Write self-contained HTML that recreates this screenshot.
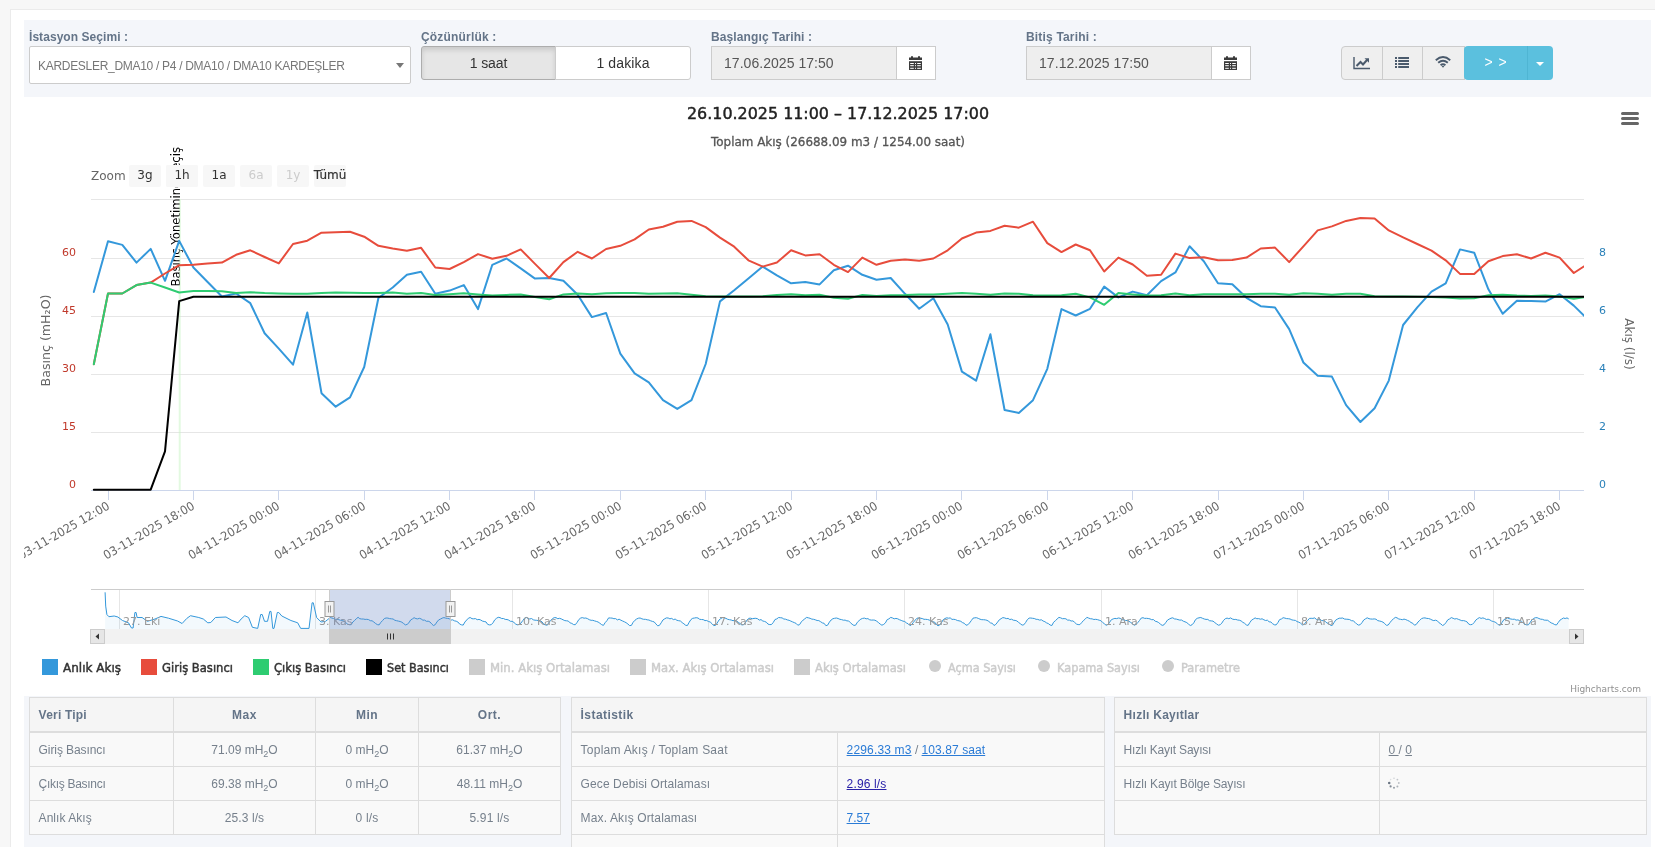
<!DOCTYPE html>
<html lang="tr"><head><meta charset="utf-8"><title>DMA10 KARDEŞLER</title>
<style>
html,body{margin:0;padding:0}
body{width:1655px;height:847px;overflow:hidden;position:relative;background:#f7f7f7;font-family:"Liberation Sans","DejaVu Sans",sans-serif;color:#676a6c;font-size:13px}
.abs{position:absolute;box-sizing:border-box}
.panel{left:10px;top:9px;width:1660px;height:860px;background:#fff;border:1px solid #ebebeb}
.bar{left:24px;top:20px;width:1627px;height:77px;background:#f4f6fa}
.lower{left:24px;top:696px;width:1627px;height:160px;background:#f4f6fa}
.lbl{font-weight:bold;font-size:12px;color:#647488;white-space:nowrap;line-height:16px}
.box{background:#fff;border:1px solid #ccc;border-radius:1px}
.chart{position:absolute;left:24px;top:97px;display:block}
.sel{left:29px;top:46px;width:382px;height:38px;border-radius:2px}
.seltxt{left:38px;top:58.5px;font-size:12px;color:#777;line-height:14px;white-space:nowrap}
.btn{text-align:center;font-size:14px;color:#333;line-height:32px;height:34px;top:46px;white-space:nowrap}
.inp{top:46px;height:34px;background:#eee;border:1px solid #ccc;font-size:14px;color:#555;line-height:32px;padding-left:12px;white-space:nowrap}
.addon{top:46px;height:34px;width:40px;background:#fff;border:1px solid #ccc;border-left:0}
.gbtn{top:46px;height:34px;background:#efefef;border:1px solid #ccc}
table{border-collapse:collapse;position:absolute;table-layout:fixed;background:#f9f9f9;font-size:12px;color:#76808c}
td,th{border:1px solid #ddd;height:33px;padding:0 0 0 8.6px;text-align:left;font-weight:normal;white-space:nowrap;overflow:hidden}
th{font-weight:bold;color:#647488;background:#f5f5f5;border-bottom:2px solid #ddd;height:33px}
.c{text-align:center;padding:0}
sub{font-size:9px;vertical-align:baseline;position:relative;top:3px;letter-spacing:0}
a{color:#2a7bd6;text-decoration:underline}
a.v{color:#2a22a8}
a.g{color:#76808c}
.wrap{position:absolute;left:0;top:0;width:1655px;height:847px;will-change:transform}
</style></head><body>
<div class="wrap">
<div class="abs panel"></div>
<div class="abs bar"></div>
<div class="abs lbl" style="left:29px;top:29px"><span style="letter-spacing:0.056px">İstasyon Seçimi :</span></div>
<div class="abs box sel"></div>
<div class="abs seltxt"><span style="letter-spacing:-0.296px">KARDESLER_DMA10 / P4 / DMA10 / DMA10 KARDEŞLER</span></div>
<svg class="abs" style="left:396px;top:63px" width="8" height="5" viewBox="0 0 8 5"><path d="M0 0H8L4 5Z" fill="#777"/></svg>
<div class="abs lbl" style="left:421px;top:29px"><span style="letter-spacing:0.181px">Çözünürlük :</span></div>
<div class="abs btn" style="left:421px;width:135px;background:#e6e6e6;border:1px solid #adadad;border-radius:3px 0 0 3px;box-shadow:inset 0 3px 5px rgba(0,0,0,.125)"><span style="letter-spacing:-0.09px">1 saat</span></div>
<div class="abs btn" style="left:555px;width:136px;background:#fff;border:1px solid #ccc;border-radius:0 3px 3px 0"><span style="letter-spacing:0.13px">1 dakika</span></div>
<div class="abs lbl" style="left:711px;top:29px"><span style="letter-spacing:0.109px">Başlangıç Tarihi :</span></div>
<div class="abs inp" style="left:711px;width:186px"><span style="letter-spacing:0.044px">17.06.2025 17:50</span></div>
<div class="abs addon" style="left:897px;width:39px"></div>
<svg class="abs" style="left:909px;top:56px" width="13" height="14" viewBox="0 0 13 14"><path d="M0 1.6H2V0.6Q3 -0.4 4 0.6V1.6H9V0.6Q10 -0.4 11 0.6V1.6H13V4H0Z" fill="#3b3b3b"/><rect x="0" y="5.2" width="13" height="8.8" fill="#3b3b3b"/><g fill="#fff"><rect x="1.2" y="7" width="3.6" height="1"/><rect x="6" y="7" width="1" height="1"/><rect x="8.2" y="7" width="3.6" height="1"/><rect x="1.2" y="9.2" width="3.6" height="1"/><rect x="6" y="9.2" width="1" height="1"/><rect x="8.2" y="9.2" width="3.6" height="1"/><rect x="1.2" y="11.8" width="3.6" height="1"/><rect x="6" y="11.8" width="1" height="1"/><rect x="8.2" y="11.8" width="3.6" height="1"/></g></svg>
<div class="abs lbl" style="left:1026px;top:29px"><span style="letter-spacing:0.175px">Bitiş Tarihi :</span></div>
<div class="abs inp" style="left:1026px;width:186px"><span style="letter-spacing:0.056px">17.12.2025 17:50</span></div>
<div class="abs addon" style="left:1212px;width:39px"></div>
<svg class="abs" style="left:1224px;top:56px" width="13" height="14" viewBox="0 0 13 14"><path d="M0 1.6H2V0.6Q3 -0.4 4 0.6V1.6H9V0.6Q10 -0.4 11 0.6V1.6H13V4H0Z" fill="#3b3b3b"/><rect x="0" y="5.2" width="13" height="8.8" fill="#3b3b3b"/><g fill="#fff"><rect x="1.2" y="7" width="3.6" height="1"/><rect x="6" y="7" width="1" height="1"/><rect x="8.2" y="7" width="3.6" height="1"/><rect x="1.2" y="9.2" width="3.6" height="1"/><rect x="6" y="9.2" width="1" height="1"/><rect x="8.2" y="9.2" width="3.6" height="1"/><rect x="1.2" y="11.8" width="3.6" height="1"/><rect x="6" y="11.8" width="1" height="1"/><rect x="8.2" y="11.8" width="3.6" height="1"/></g></svg>
<div class="abs gbtn" style="left:1341px;width:42px;border-radius:4px 0 0 4px"></div>
<div class="abs gbtn" style="left:1382px;width:41px"></div>
<div class="abs gbtn" style="left:1422px;width:43px"></div>
<svg class="abs" style="left:1353px;top:56px" width="18" height="14" viewBox="0 0 18 14"><path d="M1 1V12.5H17" fill="none" stroke="#4a5a6c" stroke-width="1.4"/><path d="M3.5 10L7.5 6L10 8.5L14 4" fill="none" stroke="#4a5a6c" stroke-width="2"/><path d="M11.5 2.2H16V6.7Z" fill="#4a5a6c"/></svg>
<svg class="abs" style="left:1395px;top:57px" width="14" height="11" viewBox="0 0 14 11"><g fill="#4a5a6c"><rect x="0" y="0" width="2" height="2"/><rect x="3.2" y="0" width="10.8" height="2"/><rect x="0" y="3" width="2" height="2"/><rect x="3.2" y="3" width="10.8" height="2"/><rect x="0" y="6" width="2" height="2"/><rect x="3.2" y="6" width="10.8" height="2"/><rect x="0" y="9" width="2" height="2"/><rect x="3.2" y="9" width="10.8" height="2"/></g></svg>
<svg class="abs" style="left:1435px;top:56px" width="16" height="12" viewBox="0 0 16 12"><g fill="none" stroke="#4a5a6c" stroke-width="1.9" stroke-linecap="butt"><path d="M0.8 4.2Q8 -2.2 15.2 4.2"/><path d="M3.2 6.8Q8 2.6 12.8 6.8"/><path d="M5.6 9.2Q8 7.2 10.4 9.2"/></g><path d="M6.6 10.2L8 11.8L9.4 10.2Q8 9.2 6.6 10.2Z" fill="#4a5a6c"/></svg>
<div class="abs" style="left:1464px;top:46px;width:64px;height:34px;background:#5bc0de;border-right:1px solid #4fb5d3;border-radius:4px 0 0 4px"></div>
<div class="abs" style="left:1528px;top:46px;width:25px;height:34px;background:#5bc0de;border-radius:0 4px 4px 0"></div>
<div class="abs" style="left:1464px;top:46px;width:64px;height:34px;line-height:32px;text-align:center;color:#fff;font-size:14px;letter-spacing:1px;white-space:pre">&gt; &gt;</div>
<svg class="abs" style="left:1536px;top:62px" width="8" height="4" viewBox="0 0 8 4"><path d="M0 0H8L4 4Z" fill="#fff"/></svg>
<svg class="chart" viewBox="24 97 1627 599" width="1627" height="599">
<defs><clipPath id="pc"><rect x="91" y="195" width="1493" height="297"/></clipPath></defs>
<rect x="24" y="97" width="1627" height="599" fill="#fff"/>
<g font-family="'DejaVu Sans','Liberation Sans',sans-serif">
<text x="838" y="119" text-anchor="middle" font-size="16" fill="#222" stroke="#222" stroke-width="0.45" textLength="302" lengthAdjust="spacingAndGlyphs">26.10.2025 11:00 – 17.12.2025 17:00</text>
<text x="838" y="145.5" text-anchor="middle" font-size="12" fill="#555" stroke="#555" stroke-width="0.3" textLength="254" lengthAdjust="spacingAndGlyphs">Toplam Akış (26688.09 m3 / 1254.00 saat)</text>
<path d="M1622.5 113.5H1637.5M1622.5 118.5H1637.5M1622.5 123.5H1637.5" stroke="#666" stroke-width="3" stroke-linecap="round" fill="none"/>
<path d="M91 199.5H1584M91 258.5H1584M91 316.5H1584M91 374.5H1584M91 432.5H1584" stroke="#e6e6e6" stroke-width="1" fill="none"/>
<path d="M91 490.5H1584" stroke="#ccd6eb" stroke-width="1"/>
<path d="M108.5 490.5V500M193.5 490.5V500M278.5 490.5V500M364.5 490.5V500M449.5 490.5V500M534.5 490.5V500M620.5 490.5V500M705.5 490.5V500M791.5 490.5V500M876.5 490.5V500M961.5 490.5V500M1047.5 490.5V500M1132.5 490.5V500M1218.5 490.5V500M1303.5 490.5V500M1388.5 490.5V500M1474.5 490.5V500M1559.5 490.5V500" stroke="#ccd6eb" stroke-width="1"/>
<g font-size="12" fill="#555">
<text x="91" y="179.5" fill="#666">Zoom</text>
<rect x="129" y="165" width="32" height="22" rx="2" fill="#f7f7f7"/><text x="145" y="179" text-anchor="middle" fill="#333">3g</text><rect x="166" y="165" width="32" height="22" rx="2" fill="#f7f7f7"/><text x="182" y="179" text-anchor="middle" fill="#333">1h</text><rect x="203" y="165" width="32" height="22" rx="2" fill="#f7f7f7"/><text x="219" y="179" text-anchor="middle" fill="#333">1a</text><rect x="240" y="165" width="32" height="22" rx="2" fill="#f7f7f7"/><text x="256" y="179" text-anchor="middle" fill="#ccc">6a</text><rect x="277" y="165" width="32" height="22" rx="2" fill="#f7f7f7"/><text x="293" y="179" text-anchor="middle" fill="#ccc">1y</text><rect x="314" y="165" width="32" height="22" rx="2" fill="#f7f7f7"/><text x="330" y="179" text-anchor="middle" fill="#333" stroke="#333" stroke-width="0.2">Tümü</text>
</g>
<path d="M179.7 199V490" stroke="#c9f5c4" stroke-width="2" opacity="0.5"/>
<text transform="translate(179.5 286.5) rotate(-90)" font-size="12" fill="#000" textLength="139.5" lengthAdjust="spacingAndGlyphs">Basınç Yönetimine geçiş</text>
<path d="M180 199V290" stroke="#e4fbe1" stroke-width="1.4" opacity="0.6"/>
<g clip-path="url(#pc)" fill="none" stroke-width="2" stroke-linejoin="round" stroke-linecap="round">
<path d="M93.8 292.0L108.0 241.3L122.3 244.9L136.5 262.6L150.7 248.9L165.0 280.8L179.2 240.9L193.4 267.5L207.6 282.0L221.9 296.5L236.1 293.5L250.3 303.2L264.6 333.2L278.8 348.6L293.0 364.7L307.3 312.5L321.5 393.2L335.7 406.7L350.0 397.3L364.2 367.0L378.4 298.0L392.7 287.5L406.9 274.8L421.1 271.7L435.3 293.8L449.6 290.6L463.8 285.1L478.0 309.1L492.3 264.8L506.5 258.5L520.7 268.4L535.0 278.6L549.2 278.0L563.4 280.8L577.7 294.7L591.9 317.1L606.1 313.0L620.3 353.7L634.6 373.4L648.8 382.4L663.0 400.2L677.3 408.9L691.5 400.2L705.7 364.0L720.0 301.4L734.2 290.2L748.4 278.4L762.7 266.6L776.9 275.3L791.1 283.3L805.3 282.0L819.6 284.4L833.8 270.3L848.0 265.7L862.3 274.8L876.5 279.7L890.7 278.0L905.0 293.8L919.2 308.7L933.4 298.3L947.7 324.5L961.9 371.6L976.1 380.6L990.4 334.3L1004.6 410.0L1018.8 412.9L1033.0 400.2L1047.3 368.8L1061.5 309.1L1075.7 315.5L1090.0 308.8L1104.2 286.6L1118.4 297.4L1132.7 291.6L1146.9 295.3L1161.1 281.1L1175.4 272.4L1189.6 246.3L1203.8 261.2L1218.0 283.3L1232.3 284.2L1246.5 297.8L1260.7 306.2L1275.0 307.5L1289.2 329.1L1303.4 362.5L1317.7 375.7L1331.9 376.6L1346.1 405.1L1360.4 422.0L1374.6 408.2L1388.8 380.6L1403.1 325.0L1417.3 307.3L1431.5 291.7L1445.7 283.3L1460.0 249.4L1474.2 252.7L1488.4 289.3L1502.7 313.8L1516.9 300.7L1531.1 301.1L1545.4 301.6L1559.6 294.2L1573.8 305.6L1588.1 319.6" stroke="#3498db"/>
<path d="M93.8 364.2L108.0 293.5L122.3 293.5L136.5 285.1L150.7 282.6L165.0 273.5L179.2 265.2L193.4 264.8L207.6 263.4L221.9 262.6L236.1 254.8L250.3 250.3L264.6 257.0L278.8 263.4L293.0 244.0L307.3 240.7L321.5 232.7L335.7 232.2L350.0 231.8L364.2 236.7L378.4 245.8L392.7 248.5L406.9 250.7L421.1 247.8L435.3 267.5L449.6 269.0L463.8 262.1L478.0 254.1L492.3 258.7L506.5 255.8L520.7 249.4L535.0 263.9L549.2 278.0L563.4 262.1L577.7 251.8L591.9 258.5L606.1 249.0L620.3 245.8L634.6 239.4L648.8 229.5L663.0 226.8L677.3 221.7L691.5 220.9L705.7 227.1L720.0 237.6L734.2 246.7L748.4 260.3L762.7 266.6L776.9 262.5L791.1 250.3L805.3 255.4L819.6 254.3L833.8 264.8L848.0 272.1L862.3 257.6L876.5 264.8L890.7 260.8L905.0 259.4L919.2 260.8L933.4 258.5L947.7 250.3L961.9 238.5L976.1 232.6L990.4 230.9L1004.6 225.8L1018.8 227.7L1033.0 221.7L1047.3 243.1L1061.5 252.1L1075.7 244.5L1090.0 250.3L1104.2 271.5L1118.4 257.6L1132.7 264.5L1146.9 275.7L1161.1 274.8L1175.4 253.6L1189.6 258.1L1203.8 257.2L1218.0 260.3L1232.3 259.9L1246.5 257.6L1260.7 248.5L1275.0 247.6L1289.2 262.1L1303.4 246.3L1317.7 230.4L1331.9 226.4L1346.1 220.9L1360.4 218.1L1374.6 218.4L1388.8 230.4L1403.1 237.3L1417.3 244.0L1431.5 250.7L1445.7 260.3L1460.0 273.9L1474.2 273.9L1488.4 261.2L1502.7 256.1L1516.9 254.3L1531.1 258.5L1545.4 252.7L1559.6 257.6L1573.8 273.0L1588.1 263.7" stroke="#e74c3c"/>
<path d="M93.8 364.2L108.0 293.5L122.3 293.5L136.5 285.1L150.7 282.6L165.0 287.5L179.2 292.5L193.4 291.1L207.6 291.1L221.9 291.3L236.1 292.9L250.3 292.2L264.6 293.1L278.8 293.5L293.0 293.8L307.3 293.8L321.5 292.9L335.7 292.4L350.0 292.7L364.2 293.1L378.4 293.1L392.7 292.5L406.9 293.8L421.1 292.9L435.3 294.9L449.6 294.2L463.8 293.3L478.0 294.4L492.3 295.6L506.5 294.9L520.7 294.5L535.0 297.1L549.2 299.3L563.4 294.4L577.7 293.5L591.9 294.2L606.1 293.3L620.3 293.1L634.6 293.1L648.8 293.8L663.0 293.5L677.3 293.3L691.5 294.7L705.7 296.2L720.0 296.5L734.2 296.5L748.4 296.5L762.7 296.3L776.9 294.9L791.1 294.2L805.3 295.3L819.6 294.7L833.8 297.8L848.0 298.7L862.3 294.9L876.5 296.0L890.7 295.3L905.0 295.1L919.2 294.5L933.4 294.5L947.7 293.8L961.9 293.1L976.1 293.8L990.4 294.7L1004.6 293.5L1018.8 293.8L1033.0 295.3L1047.3 295.6L1061.5 295.3L1075.7 293.8L1090.0 297.4L1104.2 304.8L1118.4 292.9L1132.7 294.4L1146.9 295.6L1161.1 295.3L1175.4 293.5L1189.6 295.3L1203.8 294.2L1218.0 294.2L1232.3 294.2L1246.5 294.2L1260.7 293.8L1275.0 293.8L1289.2 294.7L1303.4 293.3L1317.7 293.8L1331.9 294.7L1346.1 293.8L1360.4 293.8L1374.6 296.2L1388.8 296.5L1403.1 296.5L1417.3 296.7L1431.5 296.9L1445.7 297.4L1460.0 298.5L1474.2 298.2L1488.4 295.3L1502.7 294.7L1516.9 295.6L1531.1 296.0L1545.4 295.6L1559.6 296.5L1573.8 298.7L1588.1 296.5" stroke="#2ecc71"/>
<path d="M93.8 489.7L108.0 489.7L122.3 489.7L136.5 489.7L150.7 489.7L165.0 451.4L179.2 301.1L193.4 296.7L207.6 296.7L221.9 296.7L236.1 296.7L250.3 296.7L264.6 296.7L278.8 296.7L293.0 296.7L307.3 296.7L321.5 296.7L335.7 296.7L350.0 296.7L364.2 296.7L378.4 296.7L392.7 296.7L406.9 296.7L421.1 296.7L435.3 296.7L449.6 296.7L463.8 296.7L478.0 296.7L492.3 296.7L506.5 296.7L520.7 296.7L535.0 296.7L549.2 296.7L563.4 296.7L577.7 296.7L591.9 296.7L606.1 296.7L620.3 296.7L634.6 296.7L648.8 296.7L663.0 296.7L677.3 296.7L691.5 296.7L705.7 296.7L720.0 296.7L734.2 296.7L748.4 296.7L762.7 296.7L776.9 296.7L791.1 296.7L805.3 296.7L819.6 296.7L833.8 296.7L848.0 296.7L862.3 296.7L876.5 296.7L890.7 296.7L905.0 296.7L919.2 296.7L933.4 296.7L947.7 296.7L961.9 296.7L976.1 296.7L990.4 296.7L1004.6 296.7L1018.8 296.7L1033.0 296.7L1047.3 296.7L1061.5 296.7L1075.7 296.7L1090.0 296.7L1104.2 296.7L1118.4 296.7L1132.7 296.7L1146.9 296.7L1161.1 296.7L1175.4 296.7L1189.6 296.7L1203.8 296.7L1218.0 296.7L1232.3 296.7L1246.5 296.7L1260.7 296.7L1275.0 296.7L1289.2 296.7L1303.4 296.7L1317.7 296.7L1331.9 296.7L1346.1 296.7L1360.4 296.7L1374.6 296.7L1388.8 296.7L1403.1 296.7L1417.3 296.7L1431.5 296.7L1445.7 296.7L1460.0 296.7L1474.2 296.7L1488.4 296.7L1502.7 296.7L1516.9 296.7L1531.1 296.7L1545.4 296.7L1559.6 296.7L1573.8 296.7L1588.1 296.7" stroke="#000"/>
</g>
<rect x="166" y="165" width="32" height="22" rx="2" fill="#f7f7f7"/><text x="182" y="179" text-anchor="middle" font-size="12" fill="#333">1h</text>
<g font-size="11" fill="#c0392b"><text x="76" y="255.7" text-anchor="end">60</text><text x="76" y="313.7" text-anchor="end">45</text><text x="76" y="371.7" text-anchor="end">30</text><text x="76" y="429.7" text-anchor="end">15</text><text x="76" y="487.7" text-anchor="end">0</text></g>
<g font-size="11" fill="#2980b9"><text x="1599" y="255.7">8</text><text x="1599" y="313.7">6</text><text x="1599" y="371.7">4</text><text x="1599" y="429.7">2</text><text x="1599" y="487.7">0</text></g>
<text transform="translate(50 340.5) rotate(-90)" text-anchor="middle" font-size="12" fill="#666" textLength="92" lengthAdjust="spacingAndGlyphs">Basınç (mH₂O)</text>
<text transform="translate(1625 344) rotate(90)" text-anchor="middle" font-size="12" fill="#666">Akış (l/s)</text>
<g font-size="12" fill="#666"><text transform="translate(110.5 508.3) rotate(-30)" text-anchor="end" textLength="103" lengthAdjust="spacingAndGlyphs">03-11-2025 12:00</text><text transform="translate(195.5 508.3) rotate(-30)" text-anchor="end" textLength="103" lengthAdjust="spacingAndGlyphs">03-11-2025 18:00</text><text transform="translate(280.5 508.3) rotate(-30)" text-anchor="end" textLength="103" lengthAdjust="spacingAndGlyphs">04-11-2025 00:00</text><text transform="translate(366.5 508.3) rotate(-30)" text-anchor="end" textLength="103" lengthAdjust="spacingAndGlyphs">04-11-2025 06:00</text><text transform="translate(451.5 508.3) rotate(-30)" text-anchor="end" textLength="103" lengthAdjust="spacingAndGlyphs">04-11-2025 12:00</text><text transform="translate(536.5 508.3) rotate(-30)" text-anchor="end" textLength="103" lengthAdjust="spacingAndGlyphs">04-11-2025 18:00</text><text transform="translate(622.5 508.3) rotate(-30)" text-anchor="end" textLength="103" lengthAdjust="spacingAndGlyphs">05-11-2025 00:00</text><text transform="translate(707.5 508.3) rotate(-30)" text-anchor="end" textLength="103" lengthAdjust="spacingAndGlyphs">05-11-2025 06:00</text><text transform="translate(793.5 508.3) rotate(-30)" text-anchor="end" textLength="103" lengthAdjust="spacingAndGlyphs">05-11-2025 12:00</text><text transform="translate(878.5 508.3) rotate(-30)" text-anchor="end" textLength="103" lengthAdjust="spacingAndGlyphs">05-11-2025 18:00</text><text transform="translate(963.5 508.3) rotate(-30)" text-anchor="end" textLength="103" lengthAdjust="spacingAndGlyphs">06-11-2025 00:00</text><text transform="translate(1049.5 508.3) rotate(-30)" text-anchor="end" textLength="103" lengthAdjust="spacingAndGlyphs">06-11-2025 06:00</text><text transform="translate(1134.5 508.3) rotate(-30)" text-anchor="end" textLength="103" lengthAdjust="spacingAndGlyphs">06-11-2025 12:00</text><text transform="translate(1220.5 508.3) rotate(-30)" text-anchor="end" textLength="103" lengthAdjust="spacingAndGlyphs">06-11-2025 18:00</text><text transform="translate(1305.5 508.3) rotate(-30)" text-anchor="end" textLength="103" lengthAdjust="spacingAndGlyphs">07-11-2025 00:00</text><text transform="translate(1390.5 508.3) rotate(-30)" text-anchor="end" textLength="103" lengthAdjust="spacingAndGlyphs">07-11-2025 06:00</text><text transform="translate(1476.5 508.3) rotate(-30)" text-anchor="end" textLength="103" lengthAdjust="spacingAndGlyphs">07-11-2025 12:00</text><text transform="translate(1561.5 508.3) rotate(-30)" text-anchor="end" textLength="103" lengthAdjust="spacingAndGlyphs">07-11-2025 18:00</text></g>
<!-- navigator -->
<path d="M119.5 590V629M315.5 590V629M512.5 590V629M708.5 590V629M904.5 590V629M1101.5 590V629M1297.5 590V629M1493.5 590V629" stroke="#e6e6e6" stroke-width="1"/>
<path d="M105.1 592.3L105.7 606.1L106.9 614.5L108.9 616.7L114.2 616.0L117.9 617.0L122.5 620.5L128.5 622.8L131.5 628.0L133.1 628.0L134.9 612.5L136.1 612.5L137.1 617.5L142.1 617.5L147.4 621.3L155.0 619.0L161.0 616.4L168.5 618.2L177.6 621.0L182.1 623.5L186.7 618.5L190.5 615.7L198.8 617.5L203.3 619.0L207.8 622.8L210.8 622.5L215.4 617.5L226.0 617.0L232.0 620.5L238.0 622.8L241.1 619.0L244.8 615.7L248.6 617.5L252.4 627.3L257.7 628.4L260.7 614.5L262.2 614.5L264.5 621.3L267.5 621.3L269.8 611.4L271.0 611.4L272.8 628.4L274.0 628.4L277.3 612.5L278.8 612.5L281.8 616.0L290.9 620.5L297.7 622.8L300.7 628.4L309.0 628.4L312.1 602.8L313.3 602.8L316.6 617.5L321.1 622.0L325.6 621.3L330.2 617.5L331.8 618.0L333.5 618.5L335.3 619.4L337.0 619.2L338.8 619.7L340.6 620.3L342.3 620.3L344.1 621.3L345.8 622.6L347.6 624.1L349.3 624.7L351.1 624.7L352.8 622.0L354.6 620.5L356.3 618.7L358.1 617.3L359.8 618.7L361.6 619.0L363.3 619.0L365.1 619.4L366.8 619.3L368.6 619.6L370.3 620.7L372.1 620.8L373.8 622.0L375.6 623.5L377.3 624.6L379.1 624.9L380.8 622.4L382.6 620.5L384.4 618.5L386.1 618.0L387.9 618.1L389.6 618.6L391.4 618.8L393.1 619.0L394.9 620.3L396.6 620.7L398.4 621.1L400.1 621.5L401.9 622.2L403.6 623.5L405.4 624.9L407.1 624.4L408.9 622.8L410.6 620.0L412.4 618.9L414.1 617.7L415.9 618.6L417.6 618.9L419.4 618.3L421.1 618.9L422.9 620.2L424.6 620.1L426.4 621.3L428.2 621.2L429.9 621.9L431.7 623.9L433.4 625.5L435.2 624.7L436.9 622.0L438.7 619.9L440.4 619.1L442.2 618.1L443.9 617.6L445.7 618.1L447.4 618.4L449.2 618.7L450.9 620.1L452.7 619.8L454.4 620.8L456.2 621.2L457.9 622.0L459.7 624.1L461.4 624.8L463.2 625.1L464.9 622.0L466.7 620.0L468.4 618.2L470.2 617.5L472.0 618.7L473.7 618.8L475.5 618.6L477.2 619.7L479.0 619.4L480.7 620.0L482.5 621.1L484.2 621.5L486.0 621.9L487.7 624.4L489.5 624.9L491.2 624.7L493.0 622.8L494.7 619.9L496.5 618.3L498.2 617.3L500.0 617.6L501.7 618.5L503.5 618.5L505.2 619.4L507.0 619.5L508.7 620.1L510.5 621.3L512.2 621.3L514.0 622.5L515.8 624.2L517.5 624.8L519.3 624.5L521.0 623.0L522.8 620.5L524.5 618.2L526.3 617.4L528.0 618.4L529.8 619.0L531.5 618.5L533.3 619.8L535.0 620.2L536.8 620.3L538.5 620.6L540.3 620.8L542.0 621.8L543.8 624.3L545.5 624.9L547.3 625.2L549.0 622.2L550.8 620.5L552.5 618.6L554.3 617.6L556.0 617.7L557.8 618.7L559.6 618.3L561.3 618.9L563.1 619.8L564.8 620.6L566.6 620.8L568.3 621.0L570.1 622.9L571.8 623.4L573.6 624.6L575.3 624.7L577.1 622.4L578.8 619.6L580.6 618.1L582.3 617.6L584.1 618.2L585.8 618.0L587.6 618.7L589.3 619.7L591.1 620.3L592.8 620.3L594.6 620.9L596.3 621.4L598.1 622.0L599.8 623.2L601.6 624.6L603.4 625.4L605.1 622.7L606.9 620.7L608.6 617.9L610.4 618.0L612.1 618.1L613.9 618.7L615.6 618.6L617.4 619.9L619.1 619.2L620.9 620.2L622.6 621.0L624.4 621.8L626.1 622.7L627.9 624.0L629.6 625.6L631.4 625.4L633.1 622.3L634.9 620.3L636.6 619.0L638.4 618.2L640.1 618.0L641.9 618.8L643.6 619.3L645.4 619.3L647.2 619.8L648.9 620.0L650.7 620.8L652.4 621.4L654.2 621.9L655.9 623.9L657.7 625.8L659.4 625.4L661.2 622.8L662.9 620.0L664.7 618.8L666.4 617.9L668.2 618.0L669.9 618.8L671.7 618.4L673.4 619.6L675.2 619.1L676.9 620.3L678.7 620.7L680.4 621.0L682.2 622.6L683.9 623.8L685.7 625.3L687.4 625.5L689.2 622.2L691.0 619.5L692.7 618.3L694.5 618.0L696.2 617.7L698.0 618.0L699.7 619.3L701.5 619.5L703.2 619.6L705.0 620.6L706.7 620.5L708.5 621.5L710.2 622.0L712.0 623.7L713.7 625.6L715.5 625.4L717.2 623.0L719.0 620.0L720.7 618.6L722.5 617.6L724.2 617.7L726.0 618.4L727.7 619.3L729.5 619.7L731.2 620.0L733.0 620.7L734.8 620.4L736.5 620.9L738.3 622.3L740.0 623.5L741.8 624.9L743.5 624.8L745.3 622.7L747.0 620.1L748.8 618.3L750.5 618.2L752.3 618.7L754.0 618.4L755.8 618.3L757.5 618.7L759.3 620.1L761.0 619.6L762.8 621.0L764.5 621.4L766.3 622.2L768.0 624.1L769.8 624.6L771.5 624.5L773.3 622.4L775.0 619.5L776.8 618.9L778.6 617.5L780.3 617.7L782.1 617.9L783.8 619.0L785.6 619.2L787.3 619.9L789.1 620.3L790.8 621.1L792.6 621.9L794.3 622.6L796.1 623.4L797.8 625.2L799.6 624.6L801.3 621.9L803.1 620.1L804.8 618.8L806.6 617.4L808.3 617.8L810.1 618.3L811.8 619.1L813.6 619.3L815.3 619.8L817.1 620.5L818.8 620.6L820.6 621.7L822.4 622.9L824.1 623.3L825.9 625.7L827.6 625.2L829.4 622.1L831.1 620.0L832.9 618.7L834.6 618.3L836.4 618.0L838.1 618.5L839.9 619.3L841.6 619.6L843.4 620.2L845.1 620.1L846.9 620.9L848.6 620.9L850.4 622.7L852.1 624.2L853.9 625.4L855.6 625.2L857.4 622.2L859.1 620.6L860.9 619.1L862.6 618.4L864.4 618.1L866.2 618.8L867.9 618.6L869.7 619.8L871.4 620.1L873.2 620.0L874.9 620.2L876.7 621.2L878.4 622.5L880.2 624.1L881.9 625.2L883.7 624.4L885.4 622.9L887.2 619.6L888.9 618.9L890.7 617.4L892.4 617.9L894.2 618.8L895.9 618.4L897.7 618.8L899.4 619.7L901.2 620.4L902.9 621.1L904.7 621.5L906.4 622.9L908.2 623.8L910.0 625.7L911.7 624.5L913.5 622.2L915.2 620.1L917.0 618.2L918.7 618.1L920.5 618.3L922.2 618.5L924.0 619.3L925.7 619.3L927.5 619.5L929.2 620.0L931.0 621.1L932.7 621.8L934.5 622.0L936.2 624.2L938.0 625.8L939.7 625.0L941.5 622.6L943.2 619.7L945.0 618.5L946.7 617.8L948.5 618.2L950.2 617.9L952.0 619.4L953.8 619.3L955.5 619.6L957.3 620.5L959.0 620.8L960.8 621.3L962.5 622.6L964.3 623.3L966.0 625.2L967.8 624.8L969.5 623.0L971.3 620.6L973.0 618.2L974.8 617.8L976.5 617.7L978.3 618.4L980.0 619.2L981.8 619.7L983.5 619.7L985.3 619.9L987.0 620.3L988.8 621.4L990.5 622.9L992.3 623.3L994.0 625.5L995.8 624.4L997.6 622.1L999.3 619.8L1001.1 618.7L1002.8 617.6L1004.6 617.9L1006.3 618.6L1008.1 618.4L1009.8 619.5L1011.6 619.2L1013.3 620.2L1015.1 620.4L1016.8 620.9L1018.6 622.4L1020.3 623.7L1022.1 625.1L1023.8 624.8L1025.6 622.5L1027.3 619.7L1029.1 618.1L1030.8 618.0L1032.6 618.3L1034.3 618.5L1036.1 619.3L1037.8 619.4L1039.6 620.1L1041.4 619.8L1043.1 621.0L1044.9 621.7L1046.6 622.9L1048.4 623.6L1050.1 625.0L1051.9 625.5L1053.6 622.2L1055.4 620.7L1057.1 619.0L1058.9 617.4L1060.6 617.8L1062.4 618.7L1064.1 618.6L1065.9 618.8L1067.6 620.1L1069.4 620.1L1071.1 621.0L1072.9 620.9L1074.6 622.3L1076.4 624.0L1078.1 624.6L1079.9 624.6L1081.6 622.7L1083.4 620.6L1085.2 619.1L1086.9 617.3L1088.7 618.1L1090.4 618.7L1092.2 618.9L1093.9 619.5L1095.7 619.3L1097.4 619.6L1099.2 620.2L1100.9 620.7L1102.7 622.5L1104.4 623.8L1106.2 625.3L1107.9 624.5L1109.7 622.1L1111.4 619.7L1113.2 618.9L1114.9 618.4L1116.7 618.6L1118.4 618.0L1120.2 618.3L1121.9 619.8L1123.7 619.7L1125.4 620.5L1127.2 620.5L1129.0 621.3L1130.7 622.4L1132.5 623.7L1134.2 625.3L1136.0 624.4L1137.7 622.7L1139.5 620.5L1141.2 618.1L1143.0 617.7L1144.7 618.4L1146.5 618.3L1148.2 618.5L1150.0 618.9L1151.7 619.7L1153.5 619.6L1155.2 621.2L1157.0 621.7L1158.7 622.6L1160.5 624.2L1162.2 625.4L1164.0 624.8L1165.7 622.6L1167.5 620.1L1169.2 619.1L1171.0 618.2L1172.8 617.8L1174.5 618.9L1176.3 619.1L1178.0 619.6L1179.8 620.1L1181.5 620.0L1183.3 621.2L1185.0 621.8L1186.8 622.6L1188.5 624.1L1190.3 625.5L1192.0 624.8L1193.8 622.8L1195.5 619.6L1197.3 618.3L1199.0 617.8L1200.8 617.5L1202.5 618.3L1204.3 619.0L1206.0 619.4L1207.8 619.4L1209.5 620.7L1211.3 620.9L1213.0 621.1L1214.8 622.6L1216.6 623.9L1218.3 625.2L1220.1 624.8L1221.8 623.1L1223.6 620.3L1225.3 618.7L1227.1 618.1L1228.8 618.7L1230.6 617.9L1232.3 619.0L1234.1 619.5L1235.8 619.4L1237.6 620.0L1239.3 620.2L1241.1 620.9L1242.8 622.3L1244.6 623.3L1246.3 624.9L1248.1 625.4L1249.8 622.6L1251.6 620.1L1253.3 619.1L1255.1 617.9L1256.8 618.7L1258.6 618.6L1260.4 619.2L1262.1 618.8L1263.9 619.8L1265.6 620.5L1267.4 620.2L1269.1 621.8L1270.9 622.0L1272.6 623.7L1274.4 624.8L1276.1 624.9L1277.9 622.6L1279.6 619.6L1281.4 619.0L1283.1 617.7L1284.9 618.1L1286.6 618.6L1288.4 618.7L1290.1 619.0L1291.9 619.9L1293.6 620.2L1295.4 620.4L1297.1 621.6L1298.9 622.2L1300.6 623.2L1302.4 624.9L1304.2 624.4L1305.9 622.1L1307.7 620.4L1309.4 618.4L1311.2 618.3L1312.9 618.4L1314.7 617.9L1316.4 619.4L1318.2 619.8L1319.9 619.2L1321.7 620.6L1323.4 620.6L1325.2 621.3L1326.9 623.0L1328.7 623.5L1330.4 625.2L1332.2 625.5L1333.9 622.8L1335.7 620.1L1337.4 619.1L1339.2 618.2L1340.9 618.2L1342.7 618.0L1344.4 619.0L1346.2 619.2L1348.0 619.3L1349.7 619.6L1351.5 620.7L1353.2 620.8L1355.0 622.3L1356.7 624.0L1358.5 625.1L1360.2 624.7L1362.0 622.6L1363.7 620.0L1365.5 618.8L1367.2 617.8L1369.0 618.7L1370.7 619.0L1372.5 619.1L1374.2 618.9L1376.0 619.2L1377.7 620.6L1379.5 621.0L1381.2 621.4L1383.0 622.2L1384.7 623.5L1386.5 625.4L1388.2 625.0L1390.0 622.6L1391.8 620.3L1393.5 618.8L1395.3 617.4L1397.0 617.8L1398.8 619.0L1400.5 619.3L1402.3 619.7L1404.0 619.1L1405.8 619.6L1407.5 620.4L1409.3 621.2L1411.0 622.5L1412.8 623.3L1414.5 625.2L1416.3 624.4L1418.0 622.0L1419.8 620.3L1421.5 618.6L1423.3 618.0L1425.0 617.9L1426.8 618.4L1428.5 618.5L1430.3 619.1L1432.0 620.0L1433.8 620.6L1435.6 620.2L1437.3 620.8L1439.1 622.8L1440.8 623.9L1442.6 625.5L1444.3 624.6L1446.1 622.4L1447.8 619.8L1449.6 618.9L1451.3 617.6L1453.1 618.3L1454.8 619.0L1456.6 618.6L1458.3 619.3L1460.1 620.0L1461.8 620.7L1463.6 620.6L1465.3 621.1L1467.1 621.9L1468.8 624.2L1470.6 624.7L1472.3 624.4L1474.1 622.6L1475.8 620.1L1477.6 618.7L1479.4 617.6L1481.1 618.4L1482.9 617.9L1484.6 618.5L1486.4 619.5L1488.1 619.2L1489.9 619.9L1491.6 621.0L1493.4 621.5L1495.1 622.1L1496.9 623.3L1498.6 625.0L1500.4 625.2L1502.1 622.3L1503.9 619.6L1505.6 618.8L1507.4 617.9L1509.1 618.6L1510.9 619.0L1512.6 619.3L1514.4 619.2L1516.1 620.1L1517.9 619.9L1519.6 620.5L1521.4 621.2L1523.2 622.9L1524.9 624.2L1526.7 624.9L1528.4 624.8L1530.2 622.3L1531.9 619.9L1533.7 618.4L1535.4 617.7L1537.2 617.7L1538.9 618.5L1540.7 619.2L1542.4 619.3L1544.2 620.1L1545.9 620.2L1547.7 620.3L1549.4 621.6L1551.2 622.9L1552.9 623.5L1554.7 624.6L1556.4 625.0L1558.2 622.6L1559.9 620.2L1561.7 619.1L1563.4 618.0L1565.2 618.5L1567.0 617.9L1568.7 618.9L1568.7 629L105.1 629Z" fill="#3498db" fill-opacity="0.06"/>
<path d="M105.1 592.3L105.7 606.1L106.9 614.5L108.9 616.7L114.2 616.0L117.9 617.0L122.5 620.5L128.5 622.8L131.5 628.0L133.1 628.0L134.9 612.5L136.1 612.5L137.1 617.5L142.1 617.5L147.4 621.3L155.0 619.0L161.0 616.4L168.5 618.2L177.6 621.0L182.1 623.5L186.7 618.5L190.5 615.7L198.8 617.5L203.3 619.0L207.8 622.8L210.8 622.5L215.4 617.5L226.0 617.0L232.0 620.5L238.0 622.8L241.1 619.0L244.8 615.7L248.6 617.5L252.4 627.3L257.7 628.4L260.7 614.5L262.2 614.5L264.5 621.3L267.5 621.3L269.8 611.4L271.0 611.4L272.8 628.4L274.0 628.4L277.3 612.5L278.8 612.5L281.8 616.0L290.9 620.5L297.7 622.8L300.7 628.4L309.0 628.4L312.1 602.8L313.3 602.8L316.6 617.5L321.1 622.0L325.6 621.3L330.2 617.5L331.8 618.0L333.5 618.5L335.3 619.4L337.0 619.2L338.8 619.7L340.6 620.3L342.3 620.3L344.1 621.3L345.8 622.6L347.6 624.1L349.3 624.7L351.1 624.7L352.8 622.0L354.6 620.5L356.3 618.7L358.1 617.3L359.8 618.7L361.6 619.0L363.3 619.0L365.1 619.4L366.8 619.3L368.6 619.6L370.3 620.7L372.1 620.8L373.8 622.0L375.6 623.5L377.3 624.6L379.1 624.9L380.8 622.4L382.6 620.5L384.4 618.5L386.1 618.0L387.9 618.1L389.6 618.6L391.4 618.8L393.1 619.0L394.9 620.3L396.6 620.7L398.4 621.1L400.1 621.5L401.9 622.2L403.6 623.5L405.4 624.9L407.1 624.4L408.9 622.8L410.6 620.0L412.4 618.9L414.1 617.7L415.9 618.6L417.6 618.9L419.4 618.3L421.1 618.9L422.9 620.2L424.6 620.1L426.4 621.3L428.2 621.2L429.9 621.9L431.7 623.9L433.4 625.5L435.2 624.7L436.9 622.0L438.7 619.9L440.4 619.1L442.2 618.1L443.9 617.6L445.7 618.1L447.4 618.4L449.2 618.7L450.9 620.1L452.7 619.8L454.4 620.8L456.2 621.2L457.9 622.0L459.7 624.1L461.4 624.8L463.2 625.1L464.9 622.0L466.7 620.0L468.4 618.2L470.2 617.5L472.0 618.7L473.7 618.8L475.5 618.6L477.2 619.7L479.0 619.4L480.7 620.0L482.5 621.1L484.2 621.5L486.0 621.9L487.7 624.4L489.5 624.9L491.2 624.7L493.0 622.8L494.7 619.9L496.5 618.3L498.2 617.3L500.0 617.6L501.7 618.5L503.5 618.5L505.2 619.4L507.0 619.5L508.7 620.1L510.5 621.3L512.2 621.3L514.0 622.5L515.8 624.2L517.5 624.8L519.3 624.5L521.0 623.0L522.8 620.5L524.5 618.2L526.3 617.4L528.0 618.4L529.8 619.0L531.5 618.5L533.3 619.8L535.0 620.2L536.8 620.3L538.5 620.6L540.3 620.8L542.0 621.8L543.8 624.3L545.5 624.9L547.3 625.2L549.0 622.2L550.8 620.5L552.5 618.6L554.3 617.6L556.0 617.7L557.8 618.7L559.6 618.3L561.3 618.9L563.1 619.8L564.8 620.6L566.6 620.8L568.3 621.0L570.1 622.9L571.8 623.4L573.6 624.6L575.3 624.7L577.1 622.4L578.8 619.6L580.6 618.1L582.3 617.6L584.1 618.2L585.8 618.0L587.6 618.7L589.3 619.7L591.1 620.3L592.8 620.3L594.6 620.9L596.3 621.4L598.1 622.0L599.8 623.2L601.6 624.6L603.4 625.4L605.1 622.7L606.9 620.7L608.6 617.9L610.4 618.0L612.1 618.1L613.9 618.7L615.6 618.6L617.4 619.9L619.1 619.2L620.9 620.2L622.6 621.0L624.4 621.8L626.1 622.7L627.9 624.0L629.6 625.6L631.4 625.4L633.1 622.3L634.9 620.3L636.6 619.0L638.4 618.2L640.1 618.0L641.9 618.8L643.6 619.3L645.4 619.3L647.2 619.8L648.9 620.0L650.7 620.8L652.4 621.4L654.2 621.9L655.9 623.9L657.7 625.8L659.4 625.4L661.2 622.8L662.9 620.0L664.7 618.8L666.4 617.9L668.2 618.0L669.9 618.8L671.7 618.4L673.4 619.6L675.2 619.1L676.9 620.3L678.7 620.7L680.4 621.0L682.2 622.6L683.9 623.8L685.7 625.3L687.4 625.5L689.2 622.2L691.0 619.5L692.7 618.3L694.5 618.0L696.2 617.7L698.0 618.0L699.7 619.3L701.5 619.5L703.2 619.6L705.0 620.6L706.7 620.5L708.5 621.5L710.2 622.0L712.0 623.7L713.7 625.6L715.5 625.4L717.2 623.0L719.0 620.0L720.7 618.6L722.5 617.6L724.2 617.7L726.0 618.4L727.7 619.3L729.5 619.7L731.2 620.0L733.0 620.7L734.8 620.4L736.5 620.9L738.3 622.3L740.0 623.5L741.8 624.9L743.5 624.8L745.3 622.7L747.0 620.1L748.8 618.3L750.5 618.2L752.3 618.7L754.0 618.4L755.8 618.3L757.5 618.7L759.3 620.1L761.0 619.6L762.8 621.0L764.5 621.4L766.3 622.2L768.0 624.1L769.8 624.6L771.5 624.5L773.3 622.4L775.0 619.5L776.8 618.9L778.6 617.5L780.3 617.7L782.1 617.9L783.8 619.0L785.6 619.2L787.3 619.9L789.1 620.3L790.8 621.1L792.6 621.9L794.3 622.6L796.1 623.4L797.8 625.2L799.6 624.6L801.3 621.9L803.1 620.1L804.8 618.8L806.6 617.4L808.3 617.8L810.1 618.3L811.8 619.1L813.6 619.3L815.3 619.8L817.1 620.5L818.8 620.6L820.6 621.7L822.4 622.9L824.1 623.3L825.9 625.7L827.6 625.2L829.4 622.1L831.1 620.0L832.9 618.7L834.6 618.3L836.4 618.0L838.1 618.5L839.9 619.3L841.6 619.6L843.4 620.2L845.1 620.1L846.9 620.9L848.6 620.9L850.4 622.7L852.1 624.2L853.9 625.4L855.6 625.2L857.4 622.2L859.1 620.6L860.9 619.1L862.6 618.4L864.4 618.1L866.2 618.8L867.9 618.6L869.7 619.8L871.4 620.1L873.2 620.0L874.9 620.2L876.7 621.2L878.4 622.5L880.2 624.1L881.9 625.2L883.7 624.4L885.4 622.9L887.2 619.6L888.9 618.9L890.7 617.4L892.4 617.9L894.2 618.8L895.9 618.4L897.7 618.8L899.4 619.7L901.2 620.4L902.9 621.1L904.7 621.5L906.4 622.9L908.2 623.8L910.0 625.7L911.7 624.5L913.5 622.2L915.2 620.1L917.0 618.2L918.7 618.1L920.5 618.3L922.2 618.5L924.0 619.3L925.7 619.3L927.5 619.5L929.2 620.0L931.0 621.1L932.7 621.8L934.5 622.0L936.2 624.2L938.0 625.8L939.7 625.0L941.5 622.6L943.2 619.7L945.0 618.5L946.7 617.8L948.5 618.2L950.2 617.9L952.0 619.4L953.8 619.3L955.5 619.6L957.3 620.5L959.0 620.8L960.8 621.3L962.5 622.6L964.3 623.3L966.0 625.2L967.8 624.8L969.5 623.0L971.3 620.6L973.0 618.2L974.8 617.8L976.5 617.7L978.3 618.4L980.0 619.2L981.8 619.7L983.5 619.7L985.3 619.9L987.0 620.3L988.8 621.4L990.5 622.9L992.3 623.3L994.0 625.5L995.8 624.4L997.6 622.1L999.3 619.8L1001.1 618.7L1002.8 617.6L1004.6 617.9L1006.3 618.6L1008.1 618.4L1009.8 619.5L1011.6 619.2L1013.3 620.2L1015.1 620.4L1016.8 620.9L1018.6 622.4L1020.3 623.7L1022.1 625.1L1023.8 624.8L1025.6 622.5L1027.3 619.7L1029.1 618.1L1030.8 618.0L1032.6 618.3L1034.3 618.5L1036.1 619.3L1037.8 619.4L1039.6 620.1L1041.4 619.8L1043.1 621.0L1044.9 621.7L1046.6 622.9L1048.4 623.6L1050.1 625.0L1051.9 625.5L1053.6 622.2L1055.4 620.7L1057.1 619.0L1058.9 617.4L1060.6 617.8L1062.4 618.7L1064.1 618.6L1065.9 618.8L1067.6 620.1L1069.4 620.1L1071.1 621.0L1072.9 620.9L1074.6 622.3L1076.4 624.0L1078.1 624.6L1079.9 624.6L1081.6 622.7L1083.4 620.6L1085.2 619.1L1086.9 617.3L1088.7 618.1L1090.4 618.7L1092.2 618.9L1093.9 619.5L1095.7 619.3L1097.4 619.6L1099.2 620.2L1100.9 620.7L1102.7 622.5L1104.4 623.8L1106.2 625.3L1107.9 624.5L1109.7 622.1L1111.4 619.7L1113.2 618.9L1114.9 618.4L1116.7 618.6L1118.4 618.0L1120.2 618.3L1121.9 619.8L1123.7 619.7L1125.4 620.5L1127.2 620.5L1129.0 621.3L1130.7 622.4L1132.5 623.7L1134.2 625.3L1136.0 624.4L1137.7 622.7L1139.5 620.5L1141.2 618.1L1143.0 617.7L1144.7 618.4L1146.5 618.3L1148.2 618.5L1150.0 618.9L1151.7 619.7L1153.5 619.6L1155.2 621.2L1157.0 621.7L1158.7 622.6L1160.5 624.2L1162.2 625.4L1164.0 624.8L1165.7 622.6L1167.5 620.1L1169.2 619.1L1171.0 618.2L1172.8 617.8L1174.5 618.9L1176.3 619.1L1178.0 619.6L1179.8 620.1L1181.5 620.0L1183.3 621.2L1185.0 621.8L1186.8 622.6L1188.5 624.1L1190.3 625.5L1192.0 624.8L1193.8 622.8L1195.5 619.6L1197.3 618.3L1199.0 617.8L1200.8 617.5L1202.5 618.3L1204.3 619.0L1206.0 619.4L1207.8 619.4L1209.5 620.7L1211.3 620.9L1213.0 621.1L1214.8 622.6L1216.6 623.9L1218.3 625.2L1220.1 624.8L1221.8 623.1L1223.6 620.3L1225.3 618.7L1227.1 618.1L1228.8 618.7L1230.6 617.9L1232.3 619.0L1234.1 619.5L1235.8 619.4L1237.6 620.0L1239.3 620.2L1241.1 620.9L1242.8 622.3L1244.6 623.3L1246.3 624.9L1248.1 625.4L1249.8 622.6L1251.6 620.1L1253.3 619.1L1255.1 617.9L1256.8 618.7L1258.6 618.6L1260.4 619.2L1262.1 618.8L1263.9 619.8L1265.6 620.5L1267.4 620.2L1269.1 621.8L1270.9 622.0L1272.6 623.7L1274.4 624.8L1276.1 624.9L1277.9 622.6L1279.6 619.6L1281.4 619.0L1283.1 617.7L1284.9 618.1L1286.6 618.6L1288.4 618.7L1290.1 619.0L1291.9 619.9L1293.6 620.2L1295.4 620.4L1297.1 621.6L1298.9 622.2L1300.6 623.2L1302.4 624.9L1304.2 624.4L1305.9 622.1L1307.7 620.4L1309.4 618.4L1311.2 618.3L1312.9 618.4L1314.7 617.9L1316.4 619.4L1318.2 619.8L1319.9 619.2L1321.7 620.6L1323.4 620.6L1325.2 621.3L1326.9 623.0L1328.7 623.5L1330.4 625.2L1332.2 625.5L1333.9 622.8L1335.7 620.1L1337.4 619.1L1339.2 618.2L1340.9 618.2L1342.7 618.0L1344.4 619.0L1346.2 619.2L1348.0 619.3L1349.7 619.6L1351.5 620.7L1353.2 620.8L1355.0 622.3L1356.7 624.0L1358.5 625.1L1360.2 624.7L1362.0 622.6L1363.7 620.0L1365.5 618.8L1367.2 617.8L1369.0 618.7L1370.7 619.0L1372.5 619.1L1374.2 618.9L1376.0 619.2L1377.7 620.6L1379.5 621.0L1381.2 621.4L1383.0 622.2L1384.7 623.5L1386.5 625.4L1388.2 625.0L1390.0 622.6L1391.8 620.3L1393.5 618.8L1395.3 617.4L1397.0 617.8L1398.8 619.0L1400.5 619.3L1402.3 619.7L1404.0 619.1L1405.8 619.6L1407.5 620.4L1409.3 621.2L1411.0 622.5L1412.8 623.3L1414.5 625.2L1416.3 624.4L1418.0 622.0L1419.8 620.3L1421.5 618.6L1423.3 618.0L1425.0 617.9L1426.8 618.4L1428.5 618.5L1430.3 619.1L1432.0 620.0L1433.8 620.6L1435.6 620.2L1437.3 620.8L1439.1 622.8L1440.8 623.9L1442.6 625.5L1444.3 624.6L1446.1 622.4L1447.8 619.8L1449.6 618.9L1451.3 617.6L1453.1 618.3L1454.8 619.0L1456.6 618.6L1458.3 619.3L1460.1 620.0L1461.8 620.7L1463.6 620.6L1465.3 621.1L1467.1 621.9L1468.8 624.2L1470.6 624.7L1472.3 624.4L1474.1 622.6L1475.8 620.1L1477.6 618.7L1479.4 617.6L1481.1 618.4L1482.9 617.9L1484.6 618.5L1486.4 619.5L1488.1 619.2L1489.9 619.9L1491.6 621.0L1493.4 621.5L1495.1 622.1L1496.9 623.3L1498.6 625.0L1500.4 625.2L1502.1 622.3L1503.9 619.6L1505.6 618.8L1507.4 617.9L1509.1 618.6L1510.9 619.0L1512.6 619.3L1514.4 619.2L1516.1 620.1L1517.9 619.9L1519.6 620.5L1521.4 621.2L1523.2 622.9L1524.9 624.2L1526.7 624.9L1528.4 624.8L1530.2 622.3L1531.9 619.9L1533.7 618.4L1535.4 617.7L1537.2 617.7L1538.9 618.5L1540.7 619.2L1542.4 619.3L1544.2 620.1L1545.9 620.2L1547.7 620.3L1549.4 621.6L1551.2 622.9L1552.9 623.5L1554.7 624.6L1556.4 625.0L1558.2 622.6L1559.9 620.2L1561.7 619.1L1563.4 618.0L1565.2 618.5L1567.0 617.9L1568.7 618.9" fill="none" stroke="#3498db" stroke-width="1"/>
<g font-size="11" fill="#999"><text x="123.0" y="625">27. Eki</text><text x="319.0" y="625">3. Kas</text><text x="516.0" y="625">10. Kas</text><text x="712.0" y="625">17. Kas</text><text x="908.0" y="625">24. Kas</text><text x="1105.0" y="625">1. Ara</text><text x="1301.0" y="625">8. Ara</text><text x="1497.0" y="625">15. Ara</text></g>
<rect x="329.5" y="589.5" width="121" height="40" fill="#6685c2" fill-opacity="0.3"/>
<path d="M91 589.5H329.5V629.5H450.5V589.5H1584M329.5 589.5H450.5" fill="none" stroke="#cccccc" stroke-width="1"/>
<g stroke="#999" stroke-width="1" fill="#f2f2f2">
<rect x="325" y="601.5" width="9" height="15"/><path d="M328.5 605.5V612.5M330.5 605.5V612.5" fill="none"/>
<rect x="446" y="601.5" width="9" height="15"/><path d="M449.5 605.5V612.5M451.5 605.5V612.5" fill="none"/>
</g>
<!-- scrollbar -->
<rect x="90.5" y="629.5" width="1493" height="14" fill="#f2f2f2" stroke="#f2f2f2"/>
<rect x="329.5" y="629.5" width="121" height="14" fill="#cccccc" stroke="#cccccc"/>
<path d="M387.5 633.5V639.5M390.5 633.5V639.5M393.5 633.5V639.5" stroke="#333" stroke-width="1"/>
<rect x="90.5" y="629.5" width="14" height="14" fill="#e6e6e6" stroke="#cccccc"/><path d="M99 633.5V639.5L95.5 636.5Z" fill="#333"/>
<rect x="1569.5" y="629.5" width="14" height="14" fill="#e6e6e6" stroke="#cccccc"/><path d="M1575 633.5V639.5L1578.5 636.5Z" fill="#333"/>
<!-- legend -->
<g font-size="12"><rect x="42" y="659" width="16" height="16" fill="#3498db"/><text x="63" y="672" fill="#333333" stroke="#333333" stroke-width="0.45" textLength="58" lengthAdjust="spacingAndGlyphs">Anlık Akış</text><rect x="141" y="659" width="16" height="16" fill="#e74c3c"/><text x="162" y="672" fill="#333333" stroke="#333333" stroke-width="0.45" textLength="71" lengthAdjust="spacingAndGlyphs">Giriş Basıncı</text><rect x="253" y="659" width="16" height="16" fill="#2ecc71"/><text x="274" y="672" fill="#333333" stroke="#333333" stroke-width="0.45" textLength="72" lengthAdjust="spacingAndGlyphs">Çıkış Basıncı</text><rect x="366" y="659" width="16" height="16" fill="#000000"/><text x="387" y="672" fill="#333333" stroke="#333333" stroke-width="0.45" textLength="62" lengthAdjust="spacingAndGlyphs">Set Basıncı</text><rect x="469" y="659" width="16" height="16" fill="#cccccc"/><text x="490" y="672" fill="#cccccc" stroke="#cccccc" stroke-width="0.45" textLength="120" lengthAdjust="spacingAndGlyphs">Min. Akış Ortalaması</text><rect x="630" y="659" width="16" height="16" fill="#cccccc"/><text x="651" y="672" fill="#cccccc" stroke="#cccccc" stroke-width="0.45" textLength="123" lengthAdjust="spacingAndGlyphs">Max. Akış Ortalaması</text><rect x="794" y="659" width="16" height="16" fill="#cccccc"/><text x="815" y="672" fill="#cccccc" stroke="#cccccc" stroke-width="0.45" textLength="91" lengthAdjust="spacingAndGlyphs">Akış Ortalaması</text><circle cx="935" cy="666" r="6" fill="#cccccc"/><text x="948" y="672" fill="#cccccc" stroke="#cccccc" stroke-width="0.45" textLength="68" lengthAdjust="spacingAndGlyphs">Açma Sayısı</text><circle cx="1044" cy="666" r="6" fill="#cccccc"/><text x="1057" y="672" fill="#cccccc" stroke="#cccccc" stroke-width="0.45" textLength="83" lengthAdjust="spacingAndGlyphs">Kapama Sayısı</text><circle cx="1168" cy="666" r="6" fill="#cccccc"/><text x="1181" y="672" fill="#cccccc" stroke="#cccccc" stroke-width="0.45" textLength="59" lengthAdjust="spacingAndGlyphs">Parametre</text></g>
<text x="1641" y="691.5" text-anchor="end" font-size="9" fill="#909090">Highcharts.com</text>
</g>
</svg>
<div class="abs lower"></div>
<table style="left:29px;top:697px;width:532px"><colgroup><col style="width:144px"><col style="width:142px"><col style="width:103px"><col style="width:142px"></colgroup>
<tr><th><span style="letter-spacing:0.203px">Veri Tipi</span></th><th class="c"><span style="letter-spacing:0.585px">Max</span></th><th class="c"><span style="letter-spacing:0.443px">Min</span></th><th class="c"><span style="letter-spacing:0.514px">Ort.</span></th></tr>
<tr><td><span style="letter-spacing:-0.086px">Giriş Basıncı</span></td><td class="c">71.09 mH<sub>2</sub>O</td><td class="c">0 mH<sub>2</sub>O</td><td class="c">61.37 mH<sub>2</sub>O</td></tr>
<tr><td><span style="letter-spacing:-0.291px">Çıkış Basıncı</span></td><td class="c">69.38 mH<sub>2</sub>O</td><td class="c">0 mH<sub>2</sub>O</td><td class="c">48.11 mH<sub>2</sub>O</td></tr>
<tr><td><span style="letter-spacing:0.041px">Anlık Akış</span></td><td class="c"><span style="letter-spacing:0.075px">25.3 l/s</span></td><td class="c"><span style="letter-spacing:0.197px">0 l/s</span></td><td class="c"><span style="letter-spacing:0.15px">5.91 l/s</span></td></tr>
</table>
<table style="left:571px;top:697px;width:533px"><colgroup><col style="width:266px"><col style="width:267px"></colgroup>
<tr><th colspan="2"><span style="letter-spacing:0.441px">İstatistik</span></th></tr>
<tr><td><span style="letter-spacing:0.24px">Toplam Akış / Toplam Saat</span></td><td><a><span style="letter-spacing:0.161px">2296.33 m3</span></a> / <a><span style="letter-spacing:0.08px">103.87 saat</span></a></td></tr>
<tr><td><span style="letter-spacing:0.1px">Gece Debisi Ortalaması</span></td><td><a class="v"><span style="letter-spacing:0.15px">2.96 l/s</span></a></td></tr>
<tr><td><span style="letter-spacing:0.133px">Max. Akış Ortalaması</span></td><td><a><span style="letter-spacing:0.01px">7.57</span></a></td></tr>
<tr><td></td><td></td></tr>
</table>
<table style="left:1114px;top:697px;width:532px"><colgroup><col style="width:265px"><col style="width:267px"></colgroup>
<tr><th colspan="2"><span style="letter-spacing:0.269px">Hızlı Kayıtlar</span></th></tr>
<tr><td><span style="letter-spacing:-0.209px">Hızlı Kayıt Sayısı</span></td><td><a class="g">0 </a>/ <a class="g">0</a></td></tr>
<tr><td><span style="letter-spacing:-0.15px">Hızlı Kayıt Bölge Sayısı</span></td><td><svg width="12" height="12" viewBox="0 0 12 12" style="vertical-align:middle;position:relative;left:-0.6px;top:-1.3px"><g fill="#6b7683"><circle cx="1.20" cy="6.00" r="1.3" opacity="1.0"/><circle cx="2.61" cy="9.39" r="1.1" opacity="0.85"/><circle cx="6.00" cy="10.80" r="1.0" opacity="0.7"/><circle cx="9.39" cy="9.39" r="1.0" opacity="0.55"/><circle cx="10.80" cy="6.00" r="0.9" opacity="0.45"/><circle cx="9.39" cy="2.61" r="0.9" opacity="0.4"/><circle cx="6.00" cy="1.20" r="0.8" opacity="0.3"/><circle cx="2.61" cy="2.61" r="0.8" opacity="0.2"/></g></svg></td></tr>
<tr><td></td><td></td></tr>
</table>
</div>
</body></html>
